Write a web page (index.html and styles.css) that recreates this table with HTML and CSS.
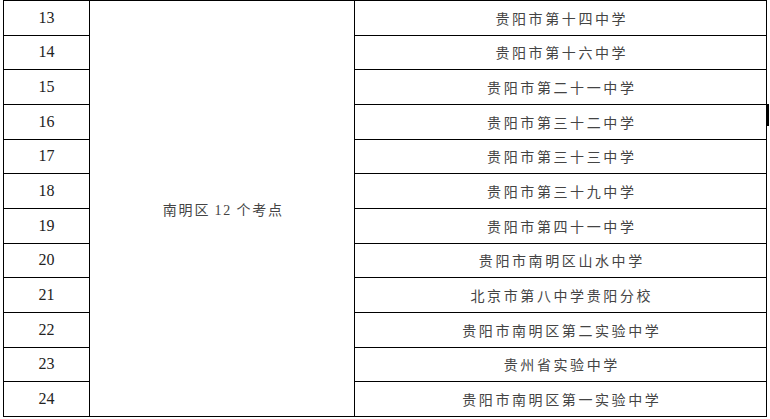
FILE: index.html
```html
<!DOCTYPE html>
<html lang="zh-CN">
<head>
<meta charset="utf-8">
<title>考点</title>
<link rel="stylesheet" href="styles.css">
</head>
<body>
<table class="exam-table">
  <colgroup>
    <col class="col-num">
    <col class="col-district">
    <col class="col-school">
  </colgroup>
  <tbody>
    <tr><td class="num">13</td><td class="district" rowspan="12">南明区 12 个考点</td><td class="school">贵阳市第十四中学</td></tr>
    <tr><td class="num">14</td><td class="school">贵阳市第十六中学</td></tr>
    <tr><td class="num">15</td><td class="school">贵阳市第二十一中学</td></tr>
    <tr><td class="num">16</td><td class="school">贵阳市第三十二中学</td></tr>
    <tr><td class="num">17</td><td class="school">贵阳市第三十三中学</td></tr>
    <tr><td class="num">18</td><td class="school">贵阳市第三十九中学</td></tr>
    <tr><td class="num">19</td><td class="school">贵阳市第四十一中学</td></tr>
    <tr><td class="num">20</td><td class="school">贵阳市南明区山水中学</td></tr>
    <tr><td class="num">21</td><td class="school">北京市第八中学贵阳分校</td></tr>
    <tr><td class="num">22</td><td class="school">贵阳市南明区第二实验中学</td></tr>
    <tr><td class="num">23</td><td class="school">贵州省实验中学</td></tr>
    <tr><td class="num">24</td><td class="school">贵阳市南明区第一实验中学</td></tr>
  </tbody>
</table>
<span class="caret"></span>
</body>
</html>
```
FILE: styles.css
```css
html, body {
  margin: 0;
  padding: 0;
  background: #ffffff;
}
body {
  position: relative;
  width: 770px;
  height: 419px;
  overflow: hidden;
}
.exam-table {
  margin-left: 3px;
  border-collapse: collapse;
  table-layout: fixed;
  width: 763px;
  height: 417px;
}
.col-num { width: 86px; }
.col-district { width: 265px; }
.col-school { width: 412px; }
.exam-table td {
  border: 1px solid #000;
  padding: 0;
  text-align: center;
  vertical-align: middle;
}
.num {
  font-family: "Liberation Serif", "Times New Roman", serif;
  font-size: 16px;
  color: #222;
}
.district, .school {
  font-family: "Liberation Serif", "Noto Sans CJK SC", serif;
  font-size: 14px;
  letter-spacing: 2.6px;
  text-indent: 2.6px;
  color: #444;
}
.district {
  letter-spacing: 1.8px;
  word-spacing: -1px;
}
.caret {
  position: absolute;
  left: 767px;
  top: 104px;
  width: 2px;
  height: 22px;
  background: #000;
}
```
